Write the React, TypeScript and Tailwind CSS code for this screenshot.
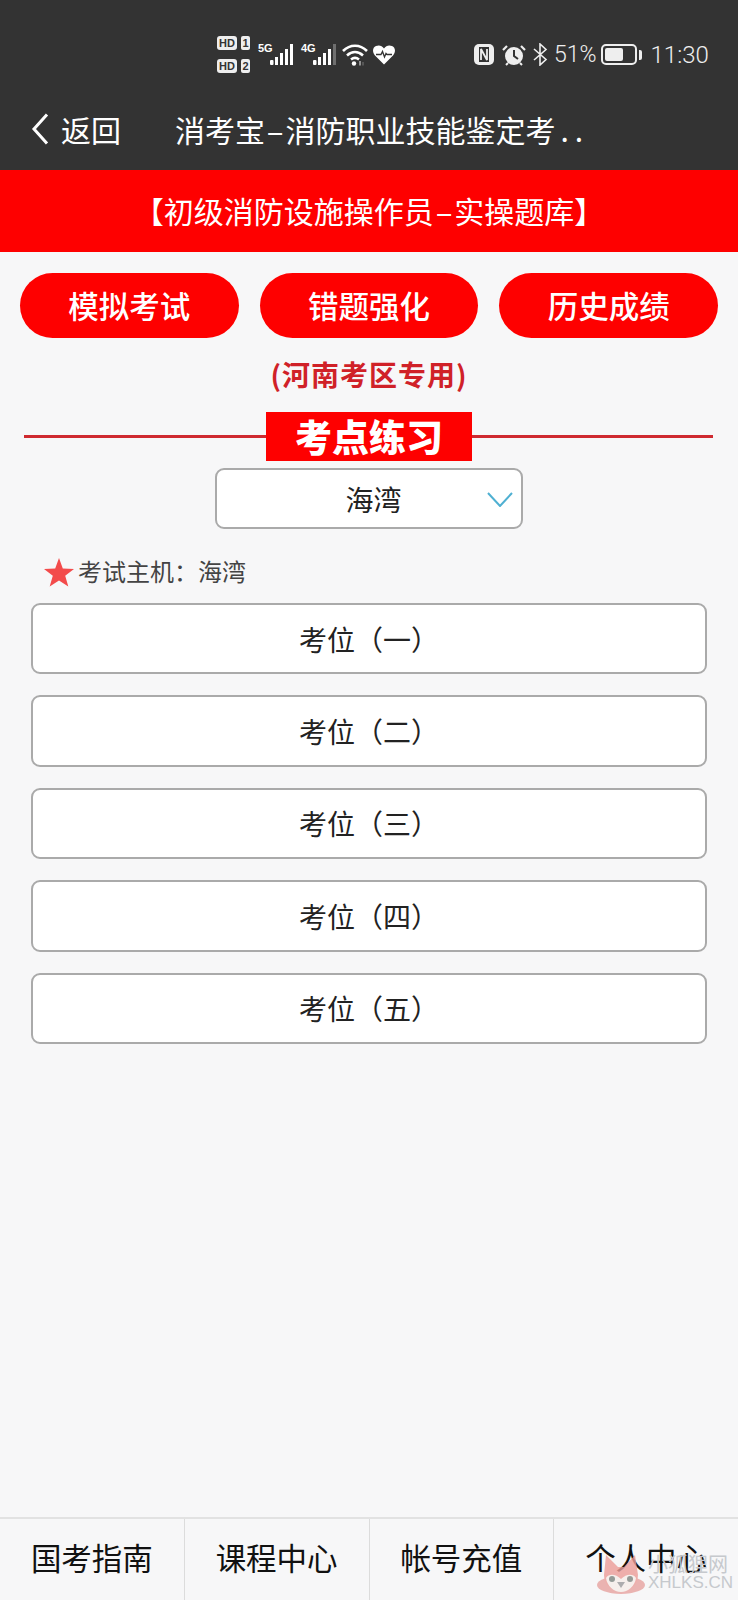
import React from 'react';

const cjk = "font-['Noto_Sans_CJK_SC','Noto_Sans',sans-serif]";

function Bars({ dim }: { dim?: boolean }) {
  return (
    <svg width="23" height="22" viewBox="0 0 23 22">
      <rect x="0" y="16" width="3.5" height="5" rx="1" fill="#fff" />
      <rect x="5" y="13" width="3" height="8" fill="#fff" />
      <rect x="10" y="9" width="3" height="12" fill="#fff" />
      <rect x="15" y="5" width="3" height="16" fill="#fff" />
      <rect x="20" y="0" width="3" height="21" fill={dim ? '#6f6f6f' : '#fff'} />
    </svg>
  );
}

function HdBadge({ n }: { n: string }) {
  return (
    <div className="flex gap-[4px]">
      <span className="flex h-[14px] w-[20px] items-center justify-center rounded-[3px] bg-[#eee] font-['Liberation_Sans',sans-serif] text-[11px] leading-none font-bold text-[#333]">HD</span>
      <span className="flex h-[14px] w-[9px] items-center justify-center rounded-[2px] bg-[#eee] font-['Liberation_Sans',sans-serif] text-[11px] leading-none font-bold text-[#333]">{n}</span>
    </div>
  );
}

function StatusBar() {
  return (
    <div className="flex h-[100px] items-center pt-[9px] pl-[217px] text-white">
      <div className="flex flex-col gap-[9px]">
        <HdBadge n="1" />
        <HdBadge n="2" />
      </div>
      <span className="mb-[12px] ml-[8px] w-[12px] font-['Liberation_Sans',sans-serif] text-[11px] leading-none font-bold">5G</span>
      <Bars />
      <span className="mb-[12px] ml-[8px] w-[12px] font-['Liberation_Sans',sans-serif] text-[11px] leading-none font-bold">4G</span>
      <Bars dim />
      <svg className="ml-[6px]" width="26" height="22" viewBox="0 0 26 22" fill="none" stroke="#fff" strokeWidth="2.6">
        <path d="M1 7C8 0 18 0 25 7" />
        <path d="M5 11.5C10 7 16 7 21 11.5" />
        <path d="M9 15.5C11.5 13.5 14.5 13.5 17 15.5" />
        <circle cx="12" cy="19.5" r="2.2" fill="#fff" stroke="none" />
        <path d="M18 17V21.5" stroke="#bbb" strokeWidth="1.4" />
        <path d="M21 18V21.5" stroke="#666" strokeWidth="1.4" />
      </svg>
      <svg className="ml-[5px]" width="22" height="20" viewBox="0 0 22 20">
        <path d="M11 19.5L2 10.5C-1 7-0.5 2.5 3 1C6 -0.2 9 0.5 11 3.5C13 0.5 16 -0.2 19 1C22.5 2.5 23 7 20 10.5Z" fill="#fff" />
        <path d="M3 9.5H8L9.5 6.5L11.5 12L13 8.5L14 9.5H19" fill="none" stroke="#333" strokeWidth="1.3" />
      </svg>
      <svg className="ml-[79px]" width="20" height="21" viewBox="0 0 20 21">
        <rect x="0" y="0" width="20" height="21" rx="5" fill="#eee" />
        <rect x="5" y="3" width="10" height="15" fill="#333" />
        <path d="M7 16V5L13 16V5" fill="none" stroke="#eee" strokeWidth="1.8" />
      </svg>
      <svg className="ml-[8px]" width="24" height="22" viewBox="0 0 24 22">
        <circle cx="12" cy="12" r="9" fill="#eee" />
        <path d="M12 6V12L16 15" fill="none" stroke="#333" strokeWidth="2" />
        <path d="M1 6L5 2M23 6L19 2" stroke="#eee" strokeWidth="2.2" fill="none" />
        <path d="M6 19L4 21M18 19L20 21" stroke="#eee" strokeWidth="2" fill="none" />
      </svg>
      <svg className="ml-[7px]" width="15" height="23" viewBox="0 0 15 23" fill="none" stroke="#eee" strokeWidth="1.6">
        <path d="M1 6L13 16.5L7 22V1L13 6.5L1 17" />
      </svg>
      <span className="ml-[6px] font-['Roboto',sans-serif] text-[23px] leading-none font-light text-[#eee]">51%</span>
      <div className="ml-[4px] flex items-center">
        <div className="flex h-[21px] w-[36px] items-center rounded-[5px] border-2 border-[#eee] p-[2px]">
          <div className="h-full w-[18px] rounded-[2px] bg-[#eee]" />
        </div>
        <div className="ml-[2px] h-[10px] w-[3px] rounded-r-[2px] bg-[#eee]" />
      </div>
      <span className="ml-[9px] font-['Roboto',sans-serif] text-[24px] leading-none font-light text-[#eee]">11:30</span>
    </div>
  );
}

function NavBar() {
  return (
    <div className="flex h-[70px] items-center pb-[12px] text-[30px] leading-none text-white">
      <svg className="ml-[31px]" width="18" height="32" viewBox="0 0 18 32" fill="none" stroke="#fff" strokeWidth="3">
        <path d="M16 1.5L3 16L16 30.5" />
      </svg>
      <span className="ml-[12px]">返回</span>
      <span className="ml-[54px]">
        消考宝<span className="mx-[5px] inline-block scale-x-[1.8]">-</span>消防职业技能鉴定考<span className="ml-[5px] tracking-[6px]">..</span>
      </span>
    </div>
  );
}

// fox mark sitting over the last tab, part of the site's watermark
function Watermark() {
  return (
    <div className="pointer-events-none absolute right-[10px] bottom-[5px] flex items-end">
      <svg className="opacity-80" width="48" height="42" viewBox="0 0 48 42">
        <ellipse cx="24" cy="32" rx="24" ry="9" fill="#e8a3a0" />
        <path d="M9 2L21 14H27L38 2L41 22C41 33 32 38 24 38C16 38 7 33 7 22Z" fill="#ec9d98" />
        <path d="M9 25C12 20 19 21 24 26C29 21 36 20 39 25C38 33 31 39 24 39C17 39 10 33 9 25Z" fill="#f6eeea" />
        <circle cx="15" cy="26" r="3" fill="#7d8580" />
        <circle cx="33" cy="26" r="3" fill="#7d8580" />
        <path d="M20 29H28L24 35Z" fill="#9b9a9c" />
      </svg>
      <div className="mb-[3px] ml-[3px] flex w-[80px] flex-col text-[#c6c9cd]">
        <span className="text-[20px] leading-[20px] whitespace-nowrap">小狐狸网</span>
        <span className="font-['Liberation_Sans',sans-serif] text-[17px] leading-[18px] whitespace-nowrap">XHLKS.CN</span>
      </div>
    </div>
  );
}

const tabs = ['模拟考试', '错题强化', '历史成绩'];
const seats = ['考位\uFF08一\uFF09', '考位\uFF08二\uFF09', '考位\uFF08三\uFF09', '考位\uFF08四\uFF09', '考位\uFF08五\uFF09'];
const nav = ['国考指南', '课程中心', '帐号充值', '个人中心'];

export default function App() {
  return (
    <div className={`flex h-[1600px] w-[738px] flex-col overflow-hidden bg-[#f7f7f8] ${cjk}`}>
      <div className="h-[170px] bg-[#333333]">
        <StatusBar />
        <NavBar />
      </div>

      <div className="flex h-[82px] items-center justify-center bg-[#fe0000] pb-[2px] text-[30px] leading-none text-white">
        【初级消防设施操作员<span className="mx-[5px] inline-block scale-x-[1.8]">-</span>实操题库】
      </div>

      <div className="mt-[21px] flex gap-[21px] px-[20px]">
        {tabs.map((t) => (
          <div key={t} className="flex h-[65px] w-[219px] items-center justify-center rounded-full bg-[#fe0000] text-[30.5px] leading-none font-medium text-white">
            {t}
          </div>
        ))}
      </div>

      <div className="mt-[21px] text-center text-[28px] leading-[30px] font-bold tracking-[1px] text-[#d02128]">(河南考区专用)</div>

      <div className="relative mt-[23px] flex h-[49px] items-center justify-center">
        <div className="absolute top-[23px] right-[25px] left-[24px] h-[3px] bg-[#cf2a30]" />
        <div className="relative flex h-[49px] w-[206px] items-center justify-center bg-[#fe0000] text-[37px] leading-none font-black text-white">
          考点练习
        </div>
      </div>

      <div className="relative mt-[7px] ml-[215px] flex h-[61px] w-[308px] items-center justify-center rounded-[9px] border-2 border-[#aaaaaa] bg-white text-[28px] leading-none text-[#222]">
        <span className="ml-[9px]">海湾</span>
        <svg className="absolute top-[22px] right-[8px]" width="26" height="15" viewBox="0 0 26 15" fill="none" stroke="#4fb0d2" strokeWidth="2">
          <path d="M1 1L13 14L25 1" />
        </svg>
      </div>

      <div className="mt-[26px] flex h-[32px] items-center pl-[44px] text-[24px] leading-none text-[#444]">
        <svg className="mt-[2px]" width="30" height="29" viewBox="0 0 30 29">
          <path d="M15 0L18.8 10.4L30 10.9L21.2 17.8L24.3 28.6L15 22.4L5.7 28.6L8.8 17.8L0 10.9L11.2 10.4Z" fill="#f34b4b" />
        </svg>
        <span className="ml-[4px]">{'考试主机\uFF1A海湾'}</span>
      </div>

      <div className="mt-[16px] flex flex-col gap-[21px] px-[31px]">
        {seats.map((s) => (
          <div key={s} className="flex h-[71.4px] items-center justify-center rounded-[9px] border-2 border-[#aaaaaa] bg-white text-[28px] leading-none text-[#222]">
            {s}
          </div>
        ))}
      </div>

      <div className="relative mt-auto flex h-[83px] border-t-2 border-[#e2e2e2] text-[30.5px] leading-none text-[#111]">
        {nav.map((n, i) => (
          <div key={n} className={`flex flex-1 items-center justify-center pb-[5px] ${i > 0 ? 'border-l border-[#dcdcdc]' : ''}`}>
            {n}
          </div>
        ))}
        <Watermark />
      </div>
    </div>
  );
}
